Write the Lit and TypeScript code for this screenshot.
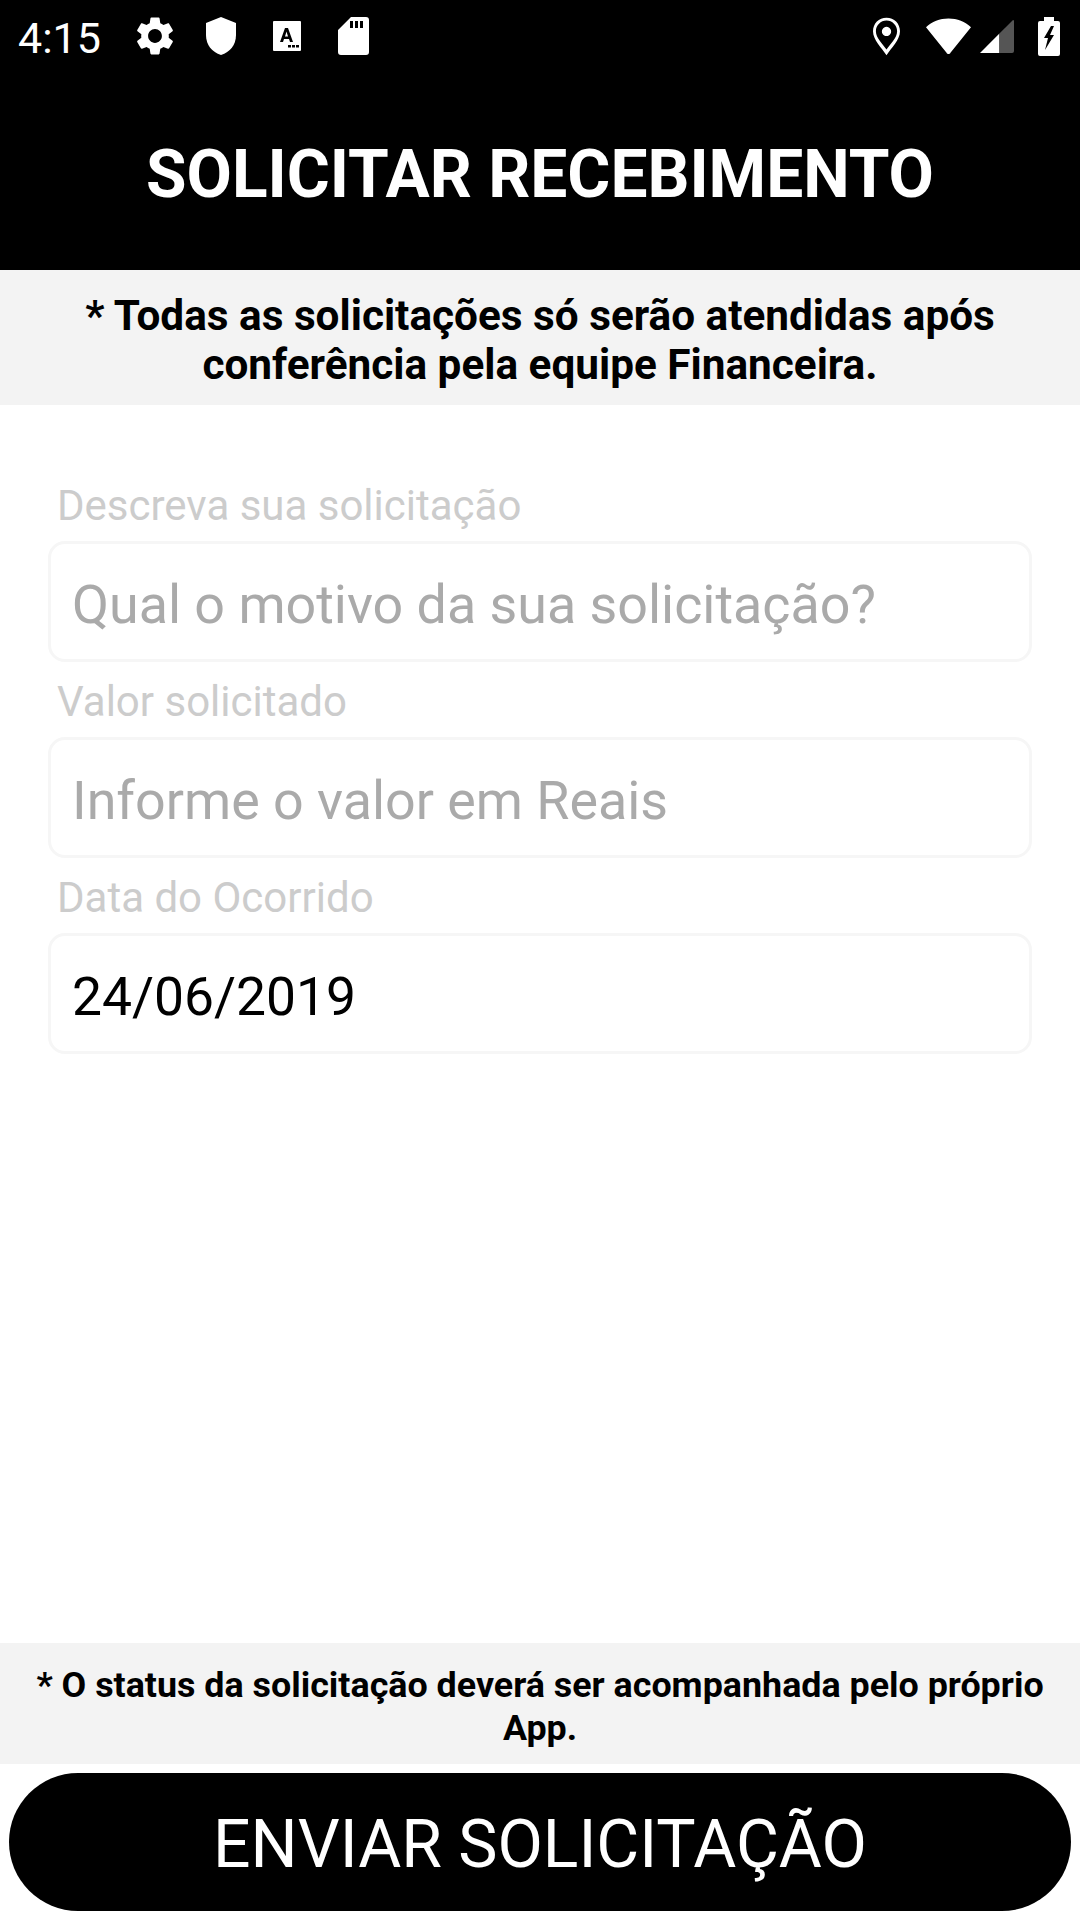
import { LitElement, html, css } from "lit";
import { customElement } from "lit/decorators.js";

const GEAR =
  "M19.14 12.94c.04-.3.06-.61.06-.94 0-.32-.02-.64-.07-.94l2.03-1.58c.18-.14.23-.41.12-.61l-1.92-3.32c-.12-.22-.37-.29-.59-.22l-2.39.96c-.5-.38-1.03-.7-1.62-.94l-.36-2.54c-.04-.24-.24-.41-.48-.41h-3.84c-.24 0-.43.17-.47.41l-.36 2.54c-.59.24-1.13.57-1.62.94l-2.39-.96c-.22-.08-.47 0-.59.22L2.74 8.87c-.12.21-.08.47.12.61l2.03 1.58c-.05.3-.09.63-.09.94s.02.64.07.94l-2.03 1.58c-.18.14-.23.41-.12.61l1.92 3.32c.12.22.37.29.59.22l2.39-.96c.5.38 1.03.7 1.62.94l.36 2.54c.05.24.24.41.48.41h3.84c.24 0 .44-.17.47-.41l.36-2.54c.59-.24 1.13-.56 1.62-.94l2.39.96c.22.08.47 0 .59-.22l1.92-3.32c.12-.22.07-.47-.12-.61l-2.01-1.58zM12 15.6c-1.98 0-3.6-1.62-3.6-3.6s1.62-3.6 3.6-3.6 3.6 1.62 3.6 3.6-1.62 3.6-3.6 3.6z";

@customElement("app-root")
export class AppRoot extends LitElement {
  static styles = css`
    :host {
      display: flex;
      flex-direction: column;
      height: 1920px;
      background: #fff;
      font-family: Roboto, "Liberation Sans", sans-serif;
      color: #000;
    }

    .top {
      background: #000;
      color: #fff;
      height: 270px;
      display: flex;
      flex-direction: column;
      flex: none;
    }

    .status {
      height: 72px;
      display: flex;
      align-items: center;
      padding: 0 20px 0 18px;
      flex: none;
    }

    .time {
      font-size: 43px;
      line-height: 72px;
      width: 104px;
      margin-top: 4px;
    }

    .icon {
      display: block;
      flex: none;
      fill: #fff;
    }

    .left-icons {
      display: flex;
      align-items: center;
    }

    .slot {
      width: 66px;
      display: flex;
      justify-content: center;
    }

    .right-icons {
      display: flex;
      align-items: center;
      margin-left: auto;
    }

    .wifi {
      margin-left: 26px;
    }

    .signal {
      margin-left: 9px;
    }

    .battery {
      margin-left: 24px;
    }

    .bar-on {
      fill: #fff;
    }

    .bar-off {
      fill: #555;
    }

    .title {
      flex: 1;
      display: flex;
      align-items: center;
      justify-content: center;
      font-size: 65.8px;
      font-weight: 700;
      padding-top: 7px;
    }

    .notice {
      background: #f3f3f3;
      text-align: center;
      font-weight: 700;
      flex: none;
      box-sizing: border-box;
    }

    .notice.first {
      height: 135px;
      font-size: 42.3px;
      line-height: 49px;
      padding: 21px 40px 0;
    }

    .notice.last {
      height: 121px;
      font-size: 35.85px;
      line-height: 43px;
      padding: 21px 20px 0;
    }

    .form {
      flex: 1;
      padding: 77px 48px 0;
      display: flex;
      flex-direction: column;
      gap: 16px;
    }

    .field label {
      display: block;
      font-size: 42px;
      line-height: 47px;
      color: #ccc;
      padding-left: 9px;
      margin-bottom: 12px;
    }

    .field input {
      display: block;
      width: 100%;
      height: 121px;
      box-sizing: border-box;
      border: 3px solid #f6f6f6;
      border-radius: 17px;
      padding: 5px 21px 0;
      font: 400 53.8px Roboto, "Liberation Sans", sans-serif;
      color: #000;
      background: #fff;
      outline: none;
    }

    .field input.filled {
      font-size: 53.4px;
    }

    .field input::placeholder {
      color: #aaa;
      opacity: 1;
    }

    .send {
      flex: none;
      display: block;
      margin: 9px;
      height: 138px;
      border: none;
      border-radius: 69px;
      background: #000;
      color: #fff;
      font: 400 66px Roboto, "Liberation Sans", sans-serif;
      padding: 5px 0 0;
    }
  `;

  private field(label: string, placeholder: string, value = "") {
    return html`
      <div class="field">
        <label>${label}</label>
        <input
          type="text"
          class=${value ? "filled" : ""}
          placeholder=${placeholder}
          .value=${value}
        />
      </div>
    `;
  }

  private leftIcons() {
    return html`
      <div class="left-icons">
        <div class="slot">
          <svg class="icon" width="46" height="46" viewBox="0 0 24 24">
            <path d=${GEAR} />
          </svg>
        </div>
        <div class="slot">
          <svg class="icon" width="32" height="38" viewBox="1 1 30 38">
            <path d="M16 1 L31 7 V19 C31 29 25 36 16 39 C7 36 1 29 1 19 V7 Z" />
          </svg>
        </div>
        <div class="slot">
          <svg class="icon" width="28" height="30" viewBox="0 0 28 30">
            <path
              fill-rule="evenodd"
              d="M1 0 H27 a1 1 0 0 1 1 1 V29 a1 1 0 0 1 -1 1 H1 a1 1 0 0 1 -1 -1 V1 a1 1 0 0 1 1 -1 Z M12 7 L7 21 H10 L11 18 H16 L17 21 H20 L15 7 Z M12 15.5 L13.5 10.5 L15 15.5 Z M15 24 h3 v2.5 h-3 Z M19 24 h3 v2.5 h-3 Z M23 24 h3 v2.5 h-3 Z"
            />
          </svg>
        </div>
        <div class="slot">
          <svg class="icon" width="31" height="38" viewBox="0 0 31 38">
            <path
              fill-rule="evenodd"
              d="M13 0 H28 a3 3 0 0 1 3 3 V35 a3 3 0 0 1 -3 3 H3 a3 3 0 0 1 -3 -3 V13 Z M12 4 V11 H15 V4 Z M17 4 V11 H20 V4 Z M22 4 V11 H25 V4 Z"
            />
          </svg>
        </div>
      </div>
    `;
  }

  private rightIcons() {
    return html`
      <div class="right-icons">
        <svg class="icon" width="27" height="39" viewBox="0 0 28 39">
          <path
            fill-rule="evenodd"
            d="M14 0 C6 0 0 6 0 14 C0 23 9 31 14 39 C19 31 28 23 28 14 C28 6 22 0 14 0 Z M14 3 C20 3 25 8 25 14 C25 21 18 27 14 33 C10 27 3 21 3 14 C3 8 8 3 14 3 Z M14 9.5 a4.8 4.8 0 1 0 0.01 0 Z"
          />
        </svg>
        <svg class="icon wifi" width="45" height="37" viewBox="0 0 46 37">
          <path d="M0 9 C6 3 14 0 23 0 C32 0 40 3 46 9 L25 35 C24 37 22 37 21 35 Z" />
        </svg>
        <svg class="icon signal" width="34" height="34" viewBox="0 0 35 35">
          <path class="bar-on" d="M0 35 L20 15 V35 Z" />
          <path class="bar-off" d="M20 15 L34 1 a1 1 0 0 1 1 1 V33 a2 2 0 0 1 -2 2 H20 Z" />
        </svg>
        <svg class="icon battery" width="22" height="39" viewBox="0 0 22 39">
          <path
            fill-rule="evenodd"
            d="M6 0 H16 V4 H20 a2 2 0 0 1 2 2 V37 a2 2 0 0 1 -2 2 H2 a2 2 0 0 1 -2 -2 V6 a2 2 0 0 1 2 -2 H6 Z M13 9 L6 21 H10 L7 33 L16 18 H12 L16 9 Z"
          />
        </svg>
      </div>
    `;
  }

  render() {
    return html`
      <header class="top">
        <div class="status">
          <span class="time">4:15</span>
          ${this.leftIcons()} ${this.rightIcons()}
        </div>
        <div class="title">SOLICITAR RECEBIMENTO</div>
      </header>

      <div class="notice first">
        * Todas as solicitações só serão atendidas após conferência pela equipe
        Financeira.
      </div>

      <div class="form">
        ${this.field("Descreva sua solicitação", "Qual o motivo da sua solicitação?")}
        ${this.field("Valor solicitado", "Informe o valor em Reais")}
        ${this.field("Data do Ocorrido", "", "24/06/2019")}
      </div>

      <div class="notice last">
        * O status da solicitação deverá ser acompanhada pelo próprio App.
      </div>

      <button class="send">ENVIAR SOLICITAÇÃO</button>
    `;
  }
}
